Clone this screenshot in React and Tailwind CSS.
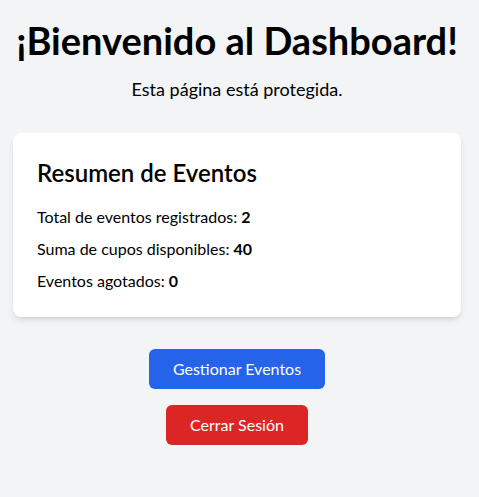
export default function App() {
  return (
    <div className="min-h-screen bg-[#f3f4f6] pt-5 pl-[13px] pr-[18px] flex flex-col items-center font-['Lato','Noto_Sans',sans-serif] text-black">
      <h1 className="text-[38px] leading-10 font-bold">¡Bienvenido al Dashboard!</h1>
      <p className="mt-[15px] text-lg">Esta página está protegida.</p>

      <div className="mt-[30px] w-full max-w-md bg-white rounded-lg shadow-md p-6">
        <h2 className="text-2xl font-semibold mb-4">Resumen de Eventos</h2>
        <p className="mb-2">
          Total de eventos registrados: <strong>2</strong>
        </p>
        <p className="mb-2">
          Suma de cupos disponibles: <strong>40</strong>
        </p>
        <p>
          Eventos agotados: <strong>0</strong>
        </p>
      </div>

      <button className="mt-8 bg-[#2563eb] text-white px-6 py-2 rounded-md">
        Gestionar Eventos
      </button>
      <button className="mt-4 bg-[#dc2626] text-white px-6 py-2 rounded-md">
        Cerrar Sesión
      </button>
    </div>
  );
}
